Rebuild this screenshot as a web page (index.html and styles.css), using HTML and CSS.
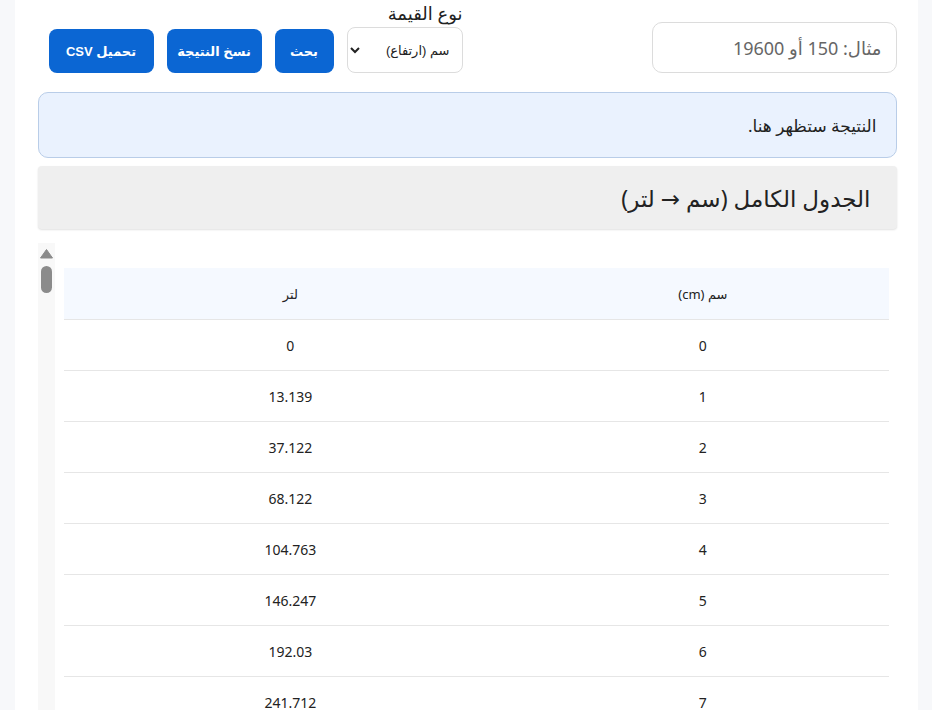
FILE: index.html
```html
<!DOCTYPE html>
<html lang="ar" dir="rtl">
<head>
  <meta charset="UTF-8" />
  <meta name="viewport" content="width=device-width, initial-scale=1" />
  <title>جدول التحويل سم → لتر</title>
  <link rel="stylesheet" href="styles.css">
</head>
<body>

<div class="page">
  <div class="controls">
    <input type="text" class="value-input" placeholder="مثال: 150 أو 19600" />
    <div class="field">
      <label for="kind">نوع القيمة</label>
      <select id="kind">
        <option>سم (ارتفاع)</option>
        <option>لتر (حجم)</option>
      </select>
    </div>
    <button class="btn btn-search">بحث</button>
    <button class="btn btn-copy">نسخ النتيجة</button>
    <button class="btn btn-csv">تحميل CSV</button>
  </div>

  <div class="result">النتيجة ستظهر هنا.</div>

  <div class="section-head">
    <h2>الجدول الكامل (سم → لتر)</h2>
  </div>

  <div class="table-wrap">
    <div class="table-area">
      <table>
        <thead>
          <tr>
            <th>سم (cm)</th>
            <th>لتر</th>
          </tr>
        </thead>
        <tbody>
          <tr><td>0</td><td>0</td></tr>
          <tr><td>1</td><td>13.139</td></tr>
          <tr><td>2</td><td>37.122</td></tr>
          <tr><td>3</td><td>68.122</td></tr>
          <tr><td>4</td><td>104.763</td></tr>
          <tr><td>5</td><td>146.247</td></tr>
          <tr><td>6</td><td>192.03</td></tr>
          <tr><td>7</td><td>241.712</td></tr>
        </tbody>
      </table>
    </div>
    <!-- شريط تمرير مرسوم -->
    <div class="scrollbar" aria-hidden="true">
      <svg class="scroll-arrow" width="17" height="20" viewBox="0 0 17 20">
        <path d="M2.5 15 L8.5 6.5 L14.5 15 Z" fill="#8b8b8b" stroke="#8b8b8b" stroke-linejoin="round" />
      </svg>
      <div class="scroll-thumb"></div>
    </div>
  </div>
</div>

</body>
</html>
```

FILE: styles.css
```css
* {
  box-sizing: border-box;
}
body {
  margin: 0;
  background: #f7f8fa;
  font-family: 'Segoe UI', 'Noto Sans', 'DejaVu Sans', sans-serif;
  color: #222;
}

.page {
  width: 903px;
  margin: 0 auto;
  background: #fff;
  padding: 2px 21px 0 23px;
  height: 100vh;
  overflow: hidden;
}

/* شريط الإدخال */
.controls {
  display: flex;
  align-items: flex-end;
  gap: 13px;
  padding-left: 11px;
}

.value-input {
  width: 245px;
  height: 51px;
  border: 1px solid #dcdcdc;
  border-radius: 10px;
  padding: 0 14px;
  font-family: inherit;
  font-size: 18px;
  color: #222;
}
.value-input::placeholder {
  color: #666;
}

.field {
  margin-inline-start: auto;
  display: flex;
  flex-direction: column;
}
.field label {
  font-size: 18px;
  line-height: 22px;
  margin-bottom: 3px;
}
.field select {
  width: 116px;
  height: 46px;
  border: 1px solid #dcdcdc;
  border-radius: 8px;
  background: #fff;
  padding: 0 8px;
  font-family: 'Liberation Sans', 'DejaVu Sans', sans-serif;
  font-size: 13px;
  color: #222;
}

.btn {
  height: 44px;
  background: #0b66d3;
  border: none;
  border-radius: 8px;
  color: #fff;
  padding: 0;
  font-family: 'Liberation Sans', 'DejaVu Sans', sans-serif;
  font-size: 13px;
  font-weight: 700;
  cursor: pointer;
}
.btn:hover {
  background: #0958b8;
}
.btn-search {
  width: 59px;
}
.btn-copy {
  width: 95px;
}
.btn-csv {
  width: 105px;
}

.result {
  margin-top: 19px;
  height: 66px;
  display: flex;
  align-items: center;
  padding: 0 19px;
  background: #eaf2fe;
  border: 1px solid #b9cde8;
  border-radius: 10px;
  font-size: 17px;
}

.section-head {
  margin-top: 8px;
  height: 63px;
  display: flex;
  align-items: center;
  padding: 0 26px;
  background: #efefef;
  border-radius: 4px;
  box-shadow: 0 1px 2px rgba(0,0,0,0.12);
}
.section-head h2 {
  margin: 0;
  font-size: 23px;
  font-weight: 400;
}

/* الجدول مع شريط التمرير */
.table-wrap {
  margin-top: 14px;
  height: 467px;
  display: flex;
  overflow: hidden;
}
.table-area {
  flex: 1;
  padding: 25px 8px 0 9px;
}
.scrollbar {
  width: 17px;
  background: #f8f8f8;
  display: flex;
  flex-direction: column;
  align-items: center;
}
.scroll-arrow {
  display: block;
}
.scroll-thumb {
  width: 11px;
  height: 27px;
  margin-top: 3px;
  background: #8b8b8b;
  border-radius: 6px;
}

table {
  width: 100%;
  border-collapse: collapse;
}
th {
  width: 45%;
  height: 51px;
  padding-top: 2px;
  background: #f5f9ff;
  font-size: 13px;
  font-weight: 400;
  color: #222;
  border-bottom: 1px solid #e6e6e6;
}
th:last-child {
  width: auto;
}
td {
  height: 51px;
  padding-top: 2px;
  text-align: center;
  font-size: 14px;
  color: #222;
  border-bottom: 1px solid #e6e6e6;
}
```
